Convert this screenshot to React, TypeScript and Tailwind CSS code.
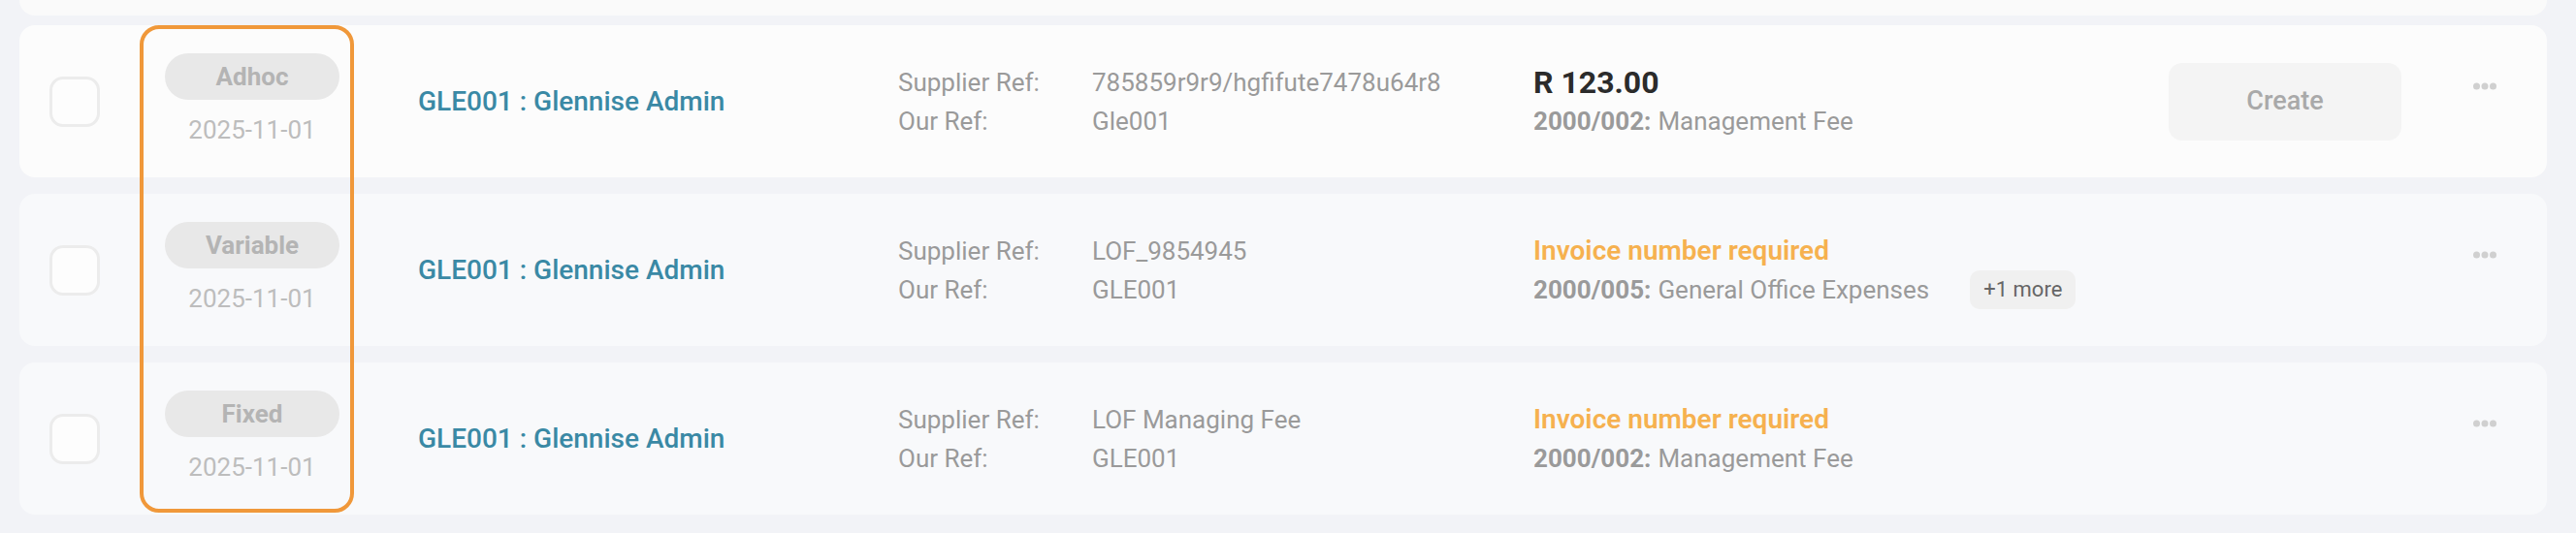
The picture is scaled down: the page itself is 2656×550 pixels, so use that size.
import React from "react";

type Row = {
  kind: string;
  date: string;
  name: string;
  supplierRef: string;
  ourRef: string;
  amount?: string;
  warning?: string;
  code: string;
  account: string;
  more?: number;
  canCreate?: boolean;
  bg: string;
};

const ROWS: Row[] = [
  {
    kind: "Adhoc",
    date: "2025-11-01",
    name: "GLE001 : Glennise Admin",
    supplierRef: "785859r9r9/hgfifute7478u64r8",
    ourRef: "Gle001",
    amount: "R 123.00",
    code: "2000/002:",
    account: "Management Fee",
    canCreate: true,
    bg: "bg-[#fcfcfc]",
  },
  {
    kind: "Variable",
    date: "2025-11-01",
    name: "GLE001 : Glennise Admin",
    supplierRef: "LOF_9854945",
    ourRef: "GLE001",
    warning: "Invoice number required",
    code: "2000/005:",
    account: "General Office Expenses",
    more: 1,
    bg: "bg-[#f8f9fb]",
  },
  {
    kind: "Fixed",
    date: "2025-11-01",
    name: "GLE001 : Glennise Admin",
    supplierRef: "LOF Managing Fee",
    ourRef: "GLE001",
    warning: "Invoice number required",
    code: "2000/002:",
    account: "Management Fee",
    bg: "bg-[#f8f9fb]",
  },
];

const Dots = () => (
  <svg width="24" height="8" viewBox="0 0 24 8">
    <circle cx="3.5" cy="4" r="3.5" fill="#d0d0d0" />
    <circle cx="12" cy="4" r="3.5" fill="#d0d0d0" />
    <circle cx="20.5" cy="4" r="3.5" fill="#d0d0d0" />
  </svg>
);

const RecurringRow = ({ row }: { row: Row }) => (
  <div
    className={`${row.bg} h-[157px] rounded-[16px] flex items-center pl-[31px] pr-[52px]`}
  >
    {/* checkbox */}
    <div className="w-[52px] h-[52px] shrink-0 rounded-[14px] border-[3.5px] border-[#ececec] bg-[#fdfdfd]" />

    {/* type + date */}
    <div className="ml-[67px] w-[180px] shrink-0 flex flex-col items-center">
      <div className="w-[180px] h-[48px] rounded-full bg-[#e8e8e8] flex items-center justify-center text-[26px] font-bold text-[#b4b4b4]">
        {row.kind}
      </div>
      <div className="mt-[11px] text-[26px] leading-[40px] text-[#bdbdbd]">
        {row.date}
      </div>
    </div>

    {/* supplier name */}
    <div className="ml-[81px] w-[495px] shrink-0 text-[28px] font-medium text-[#3a89a5]">
      {row.name}
    </div>

    {/* refs */}
    <div className="w-[655px] shrink-0 text-[26px] leading-[40px] text-[#9a9a9a]">
      <div className="flex">
        <span className="w-[200px]">Supplier Ref:</span>
        <span>{row.supplierRef}</span>
      </div>
      <div className="flex">
        <span className="w-[200px]">Our Ref:</span>
        <span>{row.ourRef}</span>
      </div>
    </div>

    {/* amount / status */}
    <div className="flex-1">
      {row.amount ? (
        <div className="text-[32px] leading-[40px] font-bold text-[#2b2b2b]">
          {row.amount}
        </div>
      ) : (
        <div className="text-[28px] leading-[40px] font-semibold text-[#f6b14f]">
          {row.warning}
        </div>
      )}
      <div className="flex items-center text-[26px] leading-[40px] text-[#9a9a9a]">
        <span className="font-bold">{row.code}</span>
        <span className="ml-[7px]">{row.account}</span>
        {row.more ? (
          <span className="ml-[42px] h-[40px] px-[14px] rounded-[10px] bg-[#f0f0f0] text-[22px] text-[#666] flex items-center">
            +{row.more} more
          </span>
        ) : null}
      </div>
    </div>

    {/* action */}
    <div className="w-[240px] shrink-0">
      {row.canCreate && (
        <button className="w-[240px] h-[80px] rounded-[14px] bg-[#f4f4f4] text-[27px] font-medium text-[#a9a9a9]">
          Create
        </button>
      )}
    </div>

    <div className="ml-[74px] self-start mt-[59px] shrink-0 flex">
      <Dots />
    </div>
  </div>
);

export default function App() {
  return (
    <div
      className="relative w-[2656px] h-[550px] overflow-hidden bg-[#f2f3f7] pl-[20px] pr-[30px]"
      style={{ fontFamily: "Roboto, 'Noto Sans', sans-serif" }}
    >
      {/* cut-off card above */}
      <div className="h-[16px] rounded-b-[16px] bg-[#fafafa]" />

      <div className="mt-[10px] flex flex-col gap-[17px]">
        {ROWS.map((row, i) => (
          <RecurringRow key={i} row={row} />
        ))}
      </div>

      {/* highlight around type/date column */}
      <div className="absolute left-[144px] top-[26px] w-[221px] h-[503px] rounded-[20px] border-4 border-[#f0983a] pointer-events-none" />
    </div>
  );
}
